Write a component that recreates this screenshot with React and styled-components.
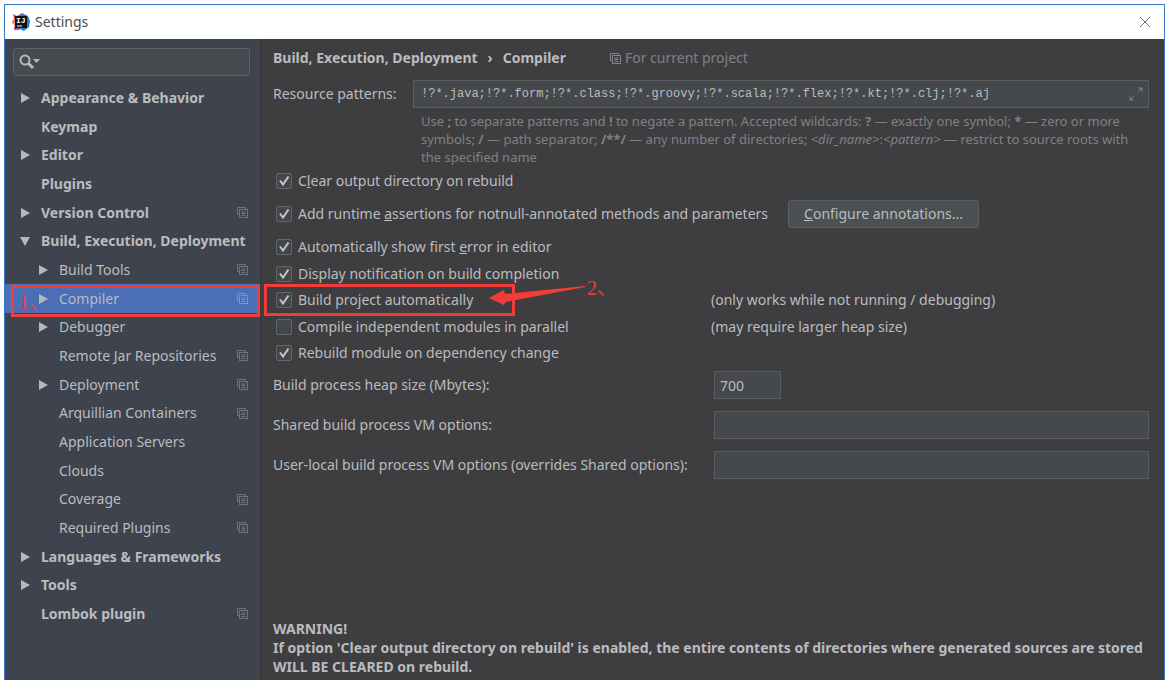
import React, { useState } from "react";
import styled, { createGlobalStyle, css } from "styled-components";

const c = {
  accent: "#3579c4",
  panel: "#3e3e41",
  side: "#3e434e",
  field: "#46494c",
  line: "#5a5d60",
  text: "#bbbcbe",
  muted: "#7f8184",
  select: "#4b6eb4",
  mark: "#f33b3a",
};

const Global = createGlobalStyle`
  * { box-sizing: border-box; }
  body {
    margin: 0;
    background: #fdfdfd;
    color: ${c.text};
    font-family: "Noto Sans", "Open Sans", sans-serif;
    font-size: 14px;
    line-height: 20px;
  }
  button, input { font: inherit; color: inherit; }
`;

const Frame = styled.div`
  min-height: 100vh;
  padding: 4px 1px 0 4px;
  display: flex;
`;

const Window = styled.div`
  flex: 1;
  min-width: 0;
  display: flex;
  flex-direction: column;
  border: 1px solid ${c.accent};
  border-bottom: 0;
`;

const TitleBar = styled.header`
  height: 34px;
  display: flex;
  align-items: center;
  gap: 5px;
  padding: 0 12px 0 7px;
  background: #fff;
  color: #4c4c4c;
`;

const Title = styled.h1`
  margin: 0;
  flex: 1;
  font-size: 14px;
  font-weight: 400;
`;

const CloseButton = styled.button`
  display: flex;
  padding: 0;
  border: 0;
  background: none;
  color: #6c6c6c;
`;

const Body = styled.div`
  flex: 1;
  display: flex;
`;

const Sidebar = styled.nav`
  flex: 0 0 256px;
  padding-top: 9px;
  background: ${c.side};
  border-right: 1px solid #38393b;
`;

const SearchBox = styled.label`
  display: flex;
  align-items: center;
  height: 28px;
  margin: 0 10px 7px 8px;
  padding-left: 5px;
  background: #454b4e;
  border: 1px solid #5c6266;
  border-radius: 3px;
`;

const SearchInput = styled.input`
  flex: 1;
  min-width: 0;
  border: 0;
  outline: 0;
  background: transparent;
`;

const Tree = styled.ul`
  margin: 0;
  padding: 0;
  list-style: none;
`;

const TreeItem = styled.li`
  position: relative;
  height: 29px;
  &:nth-child(3n) { height: 28px; }
`;

const TreeButton = styled.button`
  width: 100%;
  height: 100%;
  display: flex;
  align-items: center;
  gap: 9px;
  padding: 0 12px 0 ${(p) => (p.$nested ? 33 : 15)}px;
  border: 0;
  text-align: left;
  white-space: nowrap;
  background: ${(p) => (p.$selected ? c.select : "transparent")};
  font-weight: ${(p) => (p.$nested ? 400 : 700)};
`;

const TreeLabel = styled.span`
  flex: 1;
`;

const Arrow = styled.svg`
  flex: none;
  fill: #b4b8bf;
  visibility: ${(p) => (p.$hidden ? "hidden" : "visible")};
`;

const Content = styled.main`
  flex: 1;
  min-width: 0;
  display: flex;
  flex-direction: column;
  padding: 7px 15px 4px 12px;
  background: ${c.panel};
`;

const Crumbs = styled.div`
  display: flex;
  align-items: center;
  height: 24px;
  margin-bottom: 10px;
  font-weight: 700;
  white-space: nowrap;
`;

const CrumbSeparator = styled.span`
  padding: 0 10px;
`;

const Scope = styled.span`
  display: flex;
  align-items: center;
  gap: 4px;
  margin-left: 44px;
  color: ${c.muted};
  font-weight: 400;
`;

const PatternRow = styled.div`
  display: grid;
  grid-template-columns: 140px 1fr;
  align-items: center;
`;

const PatternField = styled.div`
  display: flex;
  align-items: center;
  height: 28px;
  padding: 0 5px 0 7px;
  background: ${c.field};
  border: 1px solid ${c.line};
`;

const PatternInput = styled.input`
  flex: 1;
  min-width: 0;
  padding: 0;
  border: 0;
  outline: 0;
  background: transparent;
  font-family: "Liberation Mono", monospace;
  font-size: 12px;
`;

const Hint = styled.p`
  grid-column: 2;
  margin: 4px 0 2px;
  padding-left: 8px;
  color: ${c.muted};
  font-size: 13px;
  line-height: 18px;
`;

const CheckRow = styled.div`
  position: relative;
  display: flex;
  align-items: center;
  height: 26px;
`;

const ButtonRow = styled(CheckRow)`
  gap: 20px;
  height: 28px;
  margin: 6px 0;
`;

const CheckGroup = styled.div`
  ${CheckRow}:nth-child(even) { height: 27px; }
`;

const CheckLabel = styled.label`
  display: flex;
  align-items: center;
  gap: 6px;
  padding-left: 3px;
  white-space: nowrap;
  ${(p) => p.$wide && css`flex: 0 0 438px;`}
`;

const CheckBoxWrap = styled.span`
  display: grid;
  > * { grid-area: 1 / 1; }
`;

const CheckInput = styled.input`
  appearance: none;
  width: 16px;
  height: 16px;
  margin: 0;
  background: #44474a;
  border: 1px solid #63676a;
  border-radius: 2px;
`;

const Tick = styled.svg`
  pointer-events: none;
  fill: none;
  stroke: #c4c6c8;
  stroke-width: 2;
`;

const PushButton = styled.button`
  height: 28px;
  padding: 0 15px;
  background: #4b5052;
  border: 1px solid #5b6062;
  border-radius: 3px;
  line-height: 20px;
  white-space: nowrap;
`;

const OptionGrid = styled.div`
  display: grid;
  grid-template-columns: 441px 1fr;
  row-gap: 12px;
  align-items: center;
  margin-top: 5px;
`;

const TextInput = styled.input`
  width: ${(p) => (p.$short ? "67px" : "100%")};
  height: 28px;
  padding: 0 5px;
  background: ${c.field};
  border: 1px solid ${c.line};
  border-radius: 0;
  outline: 0;
`;

const Warning = styled.p`
  margin: auto 0 0;
  padding-top: 12px;
  font-weight: 700;
  line-height: 19px;
`;

const Highlight = styled.span`
  position: absolute;
  pointer-events: none;
  border: 3px solid ${c.mark};
`;

const TreeHighlight = styled(Highlight)`
  inset: 1px 0 -4px 6px;
`;

const CheckHighlight = styled(Highlight)`
  top: -3px;
  left: -9px;
  width: 251px;
  height: 32px;
`;

const Step = styled.span`
  position: absolute;
  color: ${c.mark};
  font-family: "Liberation Serif", "Noto Sans CJK SC", serif;
  font-size: 20px;
  line-height: 20px;
  white-space: nowrap;
  pointer-events: none;
`;

const TreeStep = styled(Step)`
  left: 14px;
  top: 8px;
`;

const CheckStep = styled(Step)`
  left: 314px;
  top: -9px;
`;

const Pointer = styled.svg`
  position: absolute;
  left: 216px;
  top: -3px;
  pointer-events: none;
  fill: ${c.mark};
`;

function CopyIcon({ color = "#6c7480" }) {
  return (
    <svg width="11" height="11" viewBox="0 0 11 11" fill="none" stroke={color} aria-hidden="true">
      <path d="M2 7.5H.5V.5H8.5V2" />
      <rect x="2.5" y="2.5" width="8" height="8" />
      <path d="M4.500 5H8.500M4.500 6.500H8.500M4.500 8.500H8.500" />
    </svg>
  );
}

function Logo() {
  return (
    <svg width="18" height="18" viewBox="0 0 18 18" aria-hidden="true">
      <path d="M1 1L5 3L10 0L11 8L7 17L2 17L3 12L0 9L2 6Z" fill="#ee3f72" />
      <path d="M0 9L3 6L6 12L4 14Z" fill="#f98a3c" />
      <path d="M10 0L16 3L18 8L17 14L12 18L6 15Z" fill="#1683e8" />
      <path d="M2 14L9 13L7 17L2 17Z" fill="#b348a8" />
      <rect x="3" y="3" width="12" height="12" fill="#111" />
      <text x="4" y="10" fill="#fff" fontSize="8" fontWeight="700" fontFamily="Liberation Mono, monospace">IJ</text>
      <path d="M5 13H10" stroke="#fff" />
    </svg>
  );
}

const items = [
  { label: "Appearance & Behavior", arrow: "right" },
  { label: "Keymap" },
  { label: "Editor", arrow: "right" },
  { label: "Plugins" },
  { label: "Version Control", arrow: "right", copy: true },
  { label: "Build, Execution, Deployment", arrow: "down" },
  { label: "Build Tools", arrow: "right", copy: true, nested: true },
  { label: "Compiler", arrow: "right", copy: true, nested: true },
  { label: "Debugger", arrow: "right", nested: true },
  { label: "Remote Jar Repositories", copy: true, nested: true },
  { label: "Deployment", arrow: "right", copy: true, nested: true },
  { label: "Arquillian Containers", copy: true, nested: true },
  { label: "Application Servers", nested: true },
  { label: "Clouds", nested: true },
  { label: "Coverage", copy: true, nested: true },
  { label: "Required Plugins", copy: true, nested: true },
  { label: "Languages & Frameworks", arrow: "right" },
  { label: "Tools", arrow: "right" },
  { label: "Lombok plugin", copy: true },
];

function TreeRow({ item, selected }) {
  return (
    <TreeItem>
      <TreeButton type="button" $nested={item.nested} $selected={selected}>
        <Arrow width="12" height="12" viewBox="0 0 12 12" $hidden={!item.arrow} aria-hidden="true">
          <path d={item.arrow === "down" ? "M0 2H10L5 11Z" : "M1 1L10 6L1 11Z"} />
        </Arrow>
        <TreeLabel>{item.label}</TreeLabel>
        {item.copy && <CopyIcon color={selected ? "#7f95bf" : undefined} />}
      </TreeButton>
      {selected && (
        <>
          <TreeHighlight />
          <TreeStep>1、</TreeStep>
        </>
      )}
    </TreeItem>
  );
}

function Check({ initial = true, wide, children }) {
  const [checked, setChecked] = useState(initial);
  return (
    <CheckLabel $wide={wide}>
      <CheckBoxWrap>
        <CheckInput type="checkbox" checked={checked} onChange={() => setChecked(!checked)} />
        {checked && (
          <Tick width="16" height="16" viewBox="0 0 16 16" aria-hidden="true">
            <path d="M4 7.500L7 11.500L12.500 3.500" />
          </Tick>
        )}
      </CheckBoxWrap>
      <span>{children}</span>
    </CheckLabel>
  );
}

export default function App() {
  return (
    <Frame>
      <Global />
      <Window>
        <TitleBar>
          <Logo />
          <Title>Settings</Title>
          <CloseButton type="button" aria-label="Close">
            <svg width="14" height="14" viewBox="0 0 14 14" stroke="currentColor" fill="none">
              <path d="M2 2L12 12M12 2L2 12" />
            </svg>
          </CloseButton>
        </TitleBar>
        <Body>
          <Sidebar>
            <SearchBox>
              <svg width="22" height="16" viewBox="0 0 22 16" fill="none" stroke="#b6babd" aria-hidden="true">
                <circle cx="6" cy="6" r="4.500" strokeWidth="2" />
                <path d="M9 9L14 14" strokeWidth="3" />
                <path d="M14 5H21L17.500 9Z" fill="#b6babd" stroke="none" />
              </svg>
              <SearchInput type="text" aria-label="Search settings" />
            </SearchBox>
            <Tree>
              {items.map((item) => (
                <TreeRow key={item.label} item={item} selected={item.label === "Compiler"} />
              ))}
            </Tree>
          </Sidebar>
          <Content>
            <Crumbs>
              <span>Build, Execution, Deployment</span>
              <CrumbSeparator>›</CrumbSeparator>
              <span>Compiler</span>
              <Scope>
                <CopyIcon color="#80868a" />
                For current project
              </Scope>
            </Crumbs>
            <PatternRow>
              <label htmlFor="patterns">Resource patterns:</label>
              <PatternField>
                <PatternInput
                  id="patterns"
                  type="text"
                  defaultValue="!?*.java;!?*.form;!?*.class;!?*.groovy;!?*.scala;!?*.flex;!?*.kt;!?*.clj;!?*.aj"
                />
                <svg width="14" height="14" viewBox="0 0 14 14" fill="none" stroke="#777b7e" aria-hidden="true">
                  <path d="M8.500 5.500L12 2M5.500 8.500L2 12" />
                  <path d="M9 .5H13.500V5ZM.5 9V13.500H5Z" fill="#777b7e" stroke="none" />
                </svg>
              </PatternField>
              <Hint>
                Use <b>;</b> to separate patterns and <b>!</b> to negate a pattern. Accepted wildcards: <b>?</b> — exactly one
                symbol; <b>*</b> — zero or more
                <br />
                symbols; <b>/</b> — path separator; <b>/**/</b> — any number of directories;{" "}
                <i>&lt;dir_name&gt;</i>:<i>&lt;pattern&gt;</i> — restrict to source roots with
                <br />
                the specified name
              </Hint>
            </PatternRow>
            <CheckRow>
              <Check>C<u>l</u>ear output directory on rebuild</Check>
            </CheckRow>
            <ButtonRow>
              <Check>Add runtime <u>a</u>ssertions for notnull-annotated methods and parameters</Check>
              <PushButton type="button"><u>C</u>onfigure annotations...</PushButton>
            </ButtonRow>
            <CheckGroup>
              <CheckRow>
                <Check>Automatically show first <u>e</u>rror in editor</Check>
              </CheckRow>
              <CheckRow>
                <Check>Display notification on build completion</Check>
              </CheckRow>
              <CheckRow>
                <Check wide>Build project automatically</Check>
                <span>(only works while not running / debugging)</span>
                <CheckHighlight />
                <Pointer width="102" height="24" viewBox="0 0 102 24">
                  <path d="M0 14L15 6L16 10L96 2V3L17 18L15 21Z" />
                </Pointer>
                <CheckStep>2、</CheckStep>
              </CheckRow>
              <CheckRow>
                <Check wide initial={false}>Compile independent modules in parallel</Check>
                <span>(may require larger heap size)</span>
              </CheckRow>
              <CheckRow>
                <Check>Rebuild module on dependency change</Check>
              </CheckRow>
            </CheckGroup>
            <OptionGrid>
              <label htmlFor="heap">Build process heap size (Mbytes):</label>
              <TextInput id="heap" type="text" defaultValue="700" $short />
              <label htmlFor="shared">Shared build process VM options:</label>
              <TextInput id="shared" type="text" />
              <label htmlFor="local">User-local build process VM options (overrides Shared options):</label>
              <TextInput id="local" type="text" />
            </OptionGrid>
            <Warning>
              WARNING!
              <br />
              If option 'Clear output directory on rebuild' is enabled, the entire contents of directories where generated
              sources are stored WILL BE CLEARED on rebuild.
            </Warning>
          </Content>
        </Body>
      </Window>
    </Frame>
  );
}
